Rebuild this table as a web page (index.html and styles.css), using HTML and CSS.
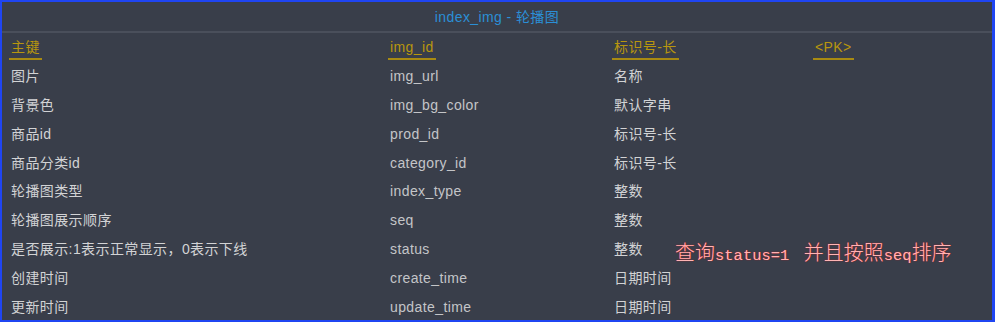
FILE: index.html
```html
<!DOCTYPE html>
<html lang="zh">
<head>
<meta charset="utf-8">
<title>index_img - 轮播图</title>
<link rel="stylesheet" href="styles.css">
</head>
<body>
<div class="frame">
  <div class="title">index_img - 轮播图</div>
  <div class="sep"></div>
  <div class="grid">
    <div class="cell head"><span class="ul">主键</span></div>
    <div class="cell head"><span class="ul">img_id</span></div>
    <div class="cell head"><span class="ul">标识号-长</span></div>
    <div class="cell head"><span class="ul">&lt;PK&gt;</span></div>

    <div class="cell">图片</div><div class="cell code">img_url</div><div class="cell">名称</div><div class="cell"></div>
    <div class="cell">背景色</div><div class="cell code">img_bg_color</div><div class="cell">默认字串</div><div class="cell"></div>
    <div class="cell">商品id</div><div class="cell code">prod_id</div><div class="cell">标识号-长</div><div class="cell"></div>
    <div class="cell">商品分类id</div><div class="cell code">category_id</div><div class="cell">标识号-长</div><div class="cell"></div>
    <div class="cell">轮播图类型</div><div class="cell code">index_type</div><div class="cell">整数</div><div class="cell"></div>
    <div class="cell">轮播图展示顺序</div><div class="cell code">seq</div><div class="cell">整数</div><div class="cell"></div>
    <div class="cell">是否展示:1表示正常显示，0表示下线</div><div class="cell code">status</div><div class="cell">整数</div><div class="cell"></div>
    <div class="cell">创建时间</div><div class="cell code">create_time</div><div class="cell">日期时间</div><div class="cell"></div>
    <div class="cell">更新时间</div><div class="cell code">update_time</div><div class="cell">日期时间</div><div class="cell"></div>
  </div>
  <div class="note">查询<span class="m gap">status=1&nbsp;</span>并且按照<span class="m">seq</span>排序</div>
</div>
</body>
</html>
```

FILE: styles.css
```css
html, body {
  margin: 0;
  padding: 0;
  background: #393e4a;
}
.frame {
  position: relative;
  width: 995px;
  height: 322px;
  box-sizing: border-box;
  border: 2px solid #1f45f2;
  border-right-width: 3px;
  background: #393e4a;
  font-family: "Liberation Sans", "Noto Sans CJK SC", sans-serif;
  font-size: 14px;
  letter-spacing: 0.4px;
  overflow: hidden;
}
.title {
  height: 29px;
  line-height: 30px;
  text-align: center;
  color: #2b8fd6;
}
.sep {
  height: 2px;
  background: #4a4f5b;
}
.grid {
  display: grid;
  grid-template-columns: 379px 224px 201px 1fr;
  grid-auto-rows: 28.8px;
  padding-left: 9px;
}
.cell {
  display: flex;
  align-items: center;
  color: #d2d3d5;
  white-space: nowrap;
  line-height: 16px;
}
.cell.code {
  color: #c4c5c8;
}
.cell.head {
  align-items: flex-start;
  padding-top: 6px;
  color: #b8960e;
}
.ul {
  display: inline-block;
  margin-left: -2px;
  padding: 0 2px 3px;
  border-bottom: 2px solid #a88a12;
}
.note {
  position: absolute;
  left: 673px;
  top: 237px;
  font-family: "Noto Sans CJK SC", sans-serif;
  font-size: 20px;
  font-weight: 300;
  line-height: 26px;
  letter-spacing: 0;
  color: #ffb4b4;
  text-shadow: 0 0 1px #ff0000;
  white-space: nowrap;
}
.note .m {
  font-family: "Liberation Mono", monospace;
  font-size: 15.5px;
  font-weight: 400;
}
.note .gap {
  margin-right: 5px;
}
```
